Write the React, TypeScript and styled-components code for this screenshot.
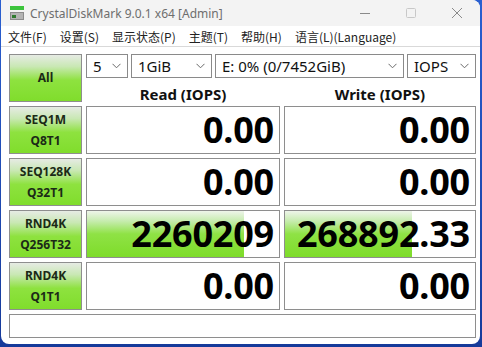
import React from 'react';
import styled, { createGlobalStyle } from 'styled-components';

const GlobalStyle = createGlobalStyle`
  html, body {
    margin: 0;
    padding: 0;
    width: 482px;
    height: 347px;
    overflow: hidden;
    background: linear-gradient(180deg, #2a5fd0 0%, #163a9a 100%);
  }
`;

const Window = styled.div`
  margin-left: 1px;
  width: 479px;
  height: 344px;
  background: #ffffff;
  border-radius: 0 8px 8px 8px;
  overflow: hidden;
  display: flex;
  flex-direction: column;
  font-family: 'Noto Sans', 'Noto Sans CJK SC', sans-serif;
`;

const TitleBar = styled.div`
  height: 26px;
  background: #f3f3f3;
  display: flex;
  align-items: center;
  padding-left: 8px;
`;

const TitleText = styled.span`
  margin-left: 5px;
  font-size: 12px;
  color: #6e6e6e;
  flex: 1;
`;

const Caption = styled.div<{ $dim?: boolean }>`
  width: 46px;
  height: 26px;
  display: flex;
  align-items: center;
  justify-content: center;
  color: ${(p) => (p.$dim ? '#c8c8c8' : '#8a8a8a')};
`;

const MenuBar = styled.div`
  height: 20px;
  display: flex;
  align-items: center;
  gap: 13px;
  padding-left: 7px;
  border-bottom: 1px solid #d9d9d9;
  font-family: 'Noto Sans CJK SC', sans-serif;
  font-size: 12px;
  color: #222;
`;

const Body = styled.div`
  padding: 7px 0 0 8px;
  display: grid;
  grid-template-columns: 73px 194px 192px;
  grid-template-rows: 24px 20px repeat(4, 48px) 24px;
  column-gap: 4px;
  row-gap: 4px;
`;

const TestButton = styled.div<{ $span?: number }>`
  grid-row: span ${(p) => p.$span ?? 1};
  box-sizing: border-box;
  border: 1px solid #8e8e8e;
  background: linear-gradient(180deg, #e6ebe4 0%, #c9e8b4 25%, #8ee23f 55%, #80dd2c 100%);
  display: flex;
  flex-direction: column;
  align-items: center;
  justify-content: center;
  gap: 7px;
  font-weight: 700;
  font-size: 12px;
  line-height: 14px;
  color: #1b2a17;
`;

const SelectRow = styled.div`
  grid-column: 2 / span 2;
  display: flex;
  gap: 3px;
`;

const Select = styled.div<{ $w: number }>`
  width: ${(p) => p.$w}px;
  box-sizing: border-box;
  border: 1px solid #8a8a8a;
  display: flex;
  align-items: center;
  padding: 0 6px 0 6px;
  font-size: 15px;
  color: #111;
  span {
    flex: 1;
  }
`;

const Header = styled.div`
  display: flex;
  align-items: flex-end;
  justify-content: center;
  padding-bottom: 0;
  margin-bottom: -1px;
  font-weight: 700;
  font-size: 15px;
  line-height: 18px;
  color: #111;
`;

const ValueBox = styled.div`
  position: relative;
  box-sizing: border-box;
  border: 1px solid #8e8e8e;
  display: flex;
  align-items: center;
  justify-content: flex-end;
  padding-right: 5px;
  overflow: hidden;
`;

const Meter = styled.div`
  position: absolute;
  left: 0;
  top: 0;
  bottom: 0;
  background: linear-gradient(180deg, #eef5ea 0%, #c6ecae 22%, #8fe245 50%, #7edc2a 100%);
`;

const Value = styled.span`
  position: relative;
  font-weight: 700;
  font-size: 36px;
  line-height: 40px;
  color: #000;
  letter-spacing: -0.2px;
`;

const Comment = styled.div`
  grid-column: 1 / span 3;
  box-sizing: border-box;
  border: 1px solid #8e8e8e;
`;

const Chevron = () => (
  <svg width="9" height="6" viewBox="0 0 9 6">
    <path d="M0.5 0.8 L4.5 4.8 L8.5 0.8" fill="none" stroke="#6a6a6a" strokeWidth="1" />
  </svg>
);

const AppIcon = () => (
  <svg width="16" height="16" viewBox="0 0 16 16">
    <rect x="1" y="1" width="14" height="4" fill="#3cc43c" />
    <rect x="1" y="7" width="14" height="8" fill="#8c8c8c" />
    <rect x="2" y="8" width="12" height="6" fill="#b4b4b4" />
    <rect x="3" y="10" width="4" height="3" fill="#2f7a2f" />
  </svg>
);

const rows = [
  { name: 'SEQ1M', sub: 'Q8T1', read: '0.00', write: '0.00', rb: 0, wb: 0 },
  { name: 'SEQ128K', sub: 'Q32T1', read: '0.00', write: '0.00', rb: 0, wb: 0 },
  { name: 'RND4K', sub: 'Q256T32', read: '2260209', write: '268892.33', rb: 82, wb: 67 },
  { name: 'RND4K', sub: 'Q1T1', read: '0.00', write: '0.00', rb: 0, wb: 0 },
];

const menus = ['文件(F)', '设置(S)', '显示状态(P)', '主题(T)', '帮助(H)', '语言(L)(Language)'];

export default function App() {
  return (
    <>
      <GlobalStyle />
      <Window>
        <TitleBar>
          <AppIcon />
          <TitleText>CrystalDiskMark 9.0.1 x64 [Admin]</TitleText>
          <Caption>
            <svg width="10" height="10" viewBox="0 0 10 10">
              <path d="M0 5.5 H10" stroke="currentColor" strokeWidth="1" />
            </svg>
          </Caption>
          <Caption $dim>
            <svg width="10" height="10" viewBox="0 0 10 10">
              <rect x="0.5" y="0.5" width="9" height="9" rx="1" fill="none" stroke="currentColor" />
            </svg>
          </Caption>
          <Caption>
            <svg width="10" height="10" viewBox="0 0 10 10">
              <path d="M0 0 L10 10 M10 0 L0 10" stroke="currentColor" strokeWidth="1" />
            </svg>
          </Caption>
        </TitleBar>
        <MenuBar>
          {menus.map((m) => (
            <span key={m}>{m}</span>
          ))}
        </MenuBar>
        <Body>
          <TestButton $span={2}>All</TestButton>
          <SelectRow>
            <Select $w={42}>
              <span>5</span>
              <Chevron />
            </Select>
            <Select $w={81}>
              <span>1GiB</span>
              <Chevron />
            </Select>
            <Select $w={189}>
              <span>E: 0% (0/7452GiB)</span>
              <Chevron />
            </Select>
            <Select $w={69}>
              <span>IOPS</span>
              <Chevron />
            </Select>
          </SelectRow>
          <Header>Read (IOPS)</Header>
          <Header>Write (IOPS)</Header>
          {rows.map((r, i) => (
            <React.Fragment key={i}>
              <TestButton>
                <span>{r.name}</span>
                <span>{r.sub}</span>
              </TestButton>
              <ValueBox>
                {r.rb > 0 && <Meter style={{ width: `${r.rb}%` }} />}
                <Value>{r.read}</Value>
              </ValueBox>
              <ValueBox>
                {r.wb > 0 && <Meter style={{ width: `${r.wb}%` }} />}
                <Value>{r.write}</Value>
              </ValueBox>
            </React.Fragment>
          ))}
          <Comment />
        </Body>
      </Window>
    </>
  );
}
